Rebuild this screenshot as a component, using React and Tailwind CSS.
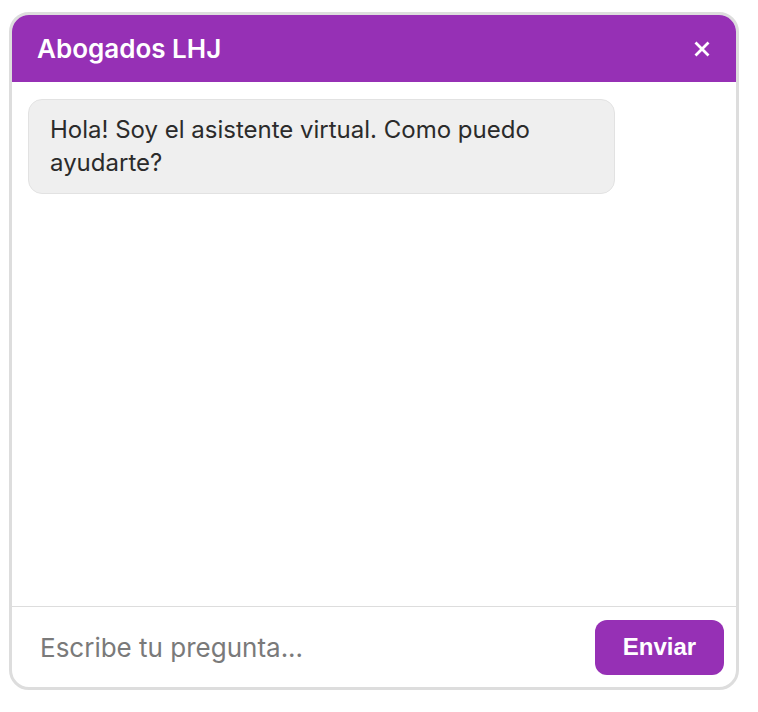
import { useState } from "react";

const App = () => {
  const [text, setText] = useState("");

  return (
    <div className="w-[758px] h-[712px] bg-white pt-[12px] pl-[9px]">
      <div className="w-[730px] h-[678px] border-[3px] border-[#dddddd] rounded-[20px] overflow-hidden flex flex-col bg-white">
        <div className="h-[67px] bg-[#9630b5] flex items-center justify-between pl-[25px] pr-[25px] shrink-0">
          <h1 className="text-white text-[26px] font-semibold font-['Inter',sans-serif] leading-none">
            Abogados LHJ
          </h1>
          <button className="text-white">
            <svg width="18" height="18" viewBox="0 0 18 18">
              <path d="M2.5 2.5 L15.5 15.5 M15.5 2.5 L2.5 15.5" stroke="white" strokeWidth="2.8" />
            </svg>
          </button>
        </div>

        <div className="flex-1 px-[16px] pt-[17px]">
          <div className="w-[587px] h-[95px] bg-[#efefef] border border-[#e2e2e2] rounded-[14px] pl-[21px] pr-4 pt-[13px] text-[24px] leading-[33px] text-[#2b2b2b] font-['Inter',sans-serif]">
            Hola! Soy el asistente virtual. Como puedo ayudarte?
          </div>
        </div>

        <div className="h-[81px] border-t border-[#dddddd] flex items-center pl-[28px] pr-[12px] shrink-0">
          <input
            type="text"
            value={text}
            autoFocus
            onChange={(e) => setText(e.target.value)}
            placeholder="Escribe tu pregunta..."
            className="flex-1 outline-none text-[26px] text-[#333] placeholder:text-[#7a7a7a] font-['Inter',sans-serif] caret-[#222]"
          />
          <button className="w-[129px] h-[55px] bg-[#9630b5] rounded-[12px] text-white text-[24px] font-bold font-['Liberation_Sans',Arial,sans-serif]">
            Enviar
          </button>
        </div>
      </div>
    </div>
  );
};

export default App;
